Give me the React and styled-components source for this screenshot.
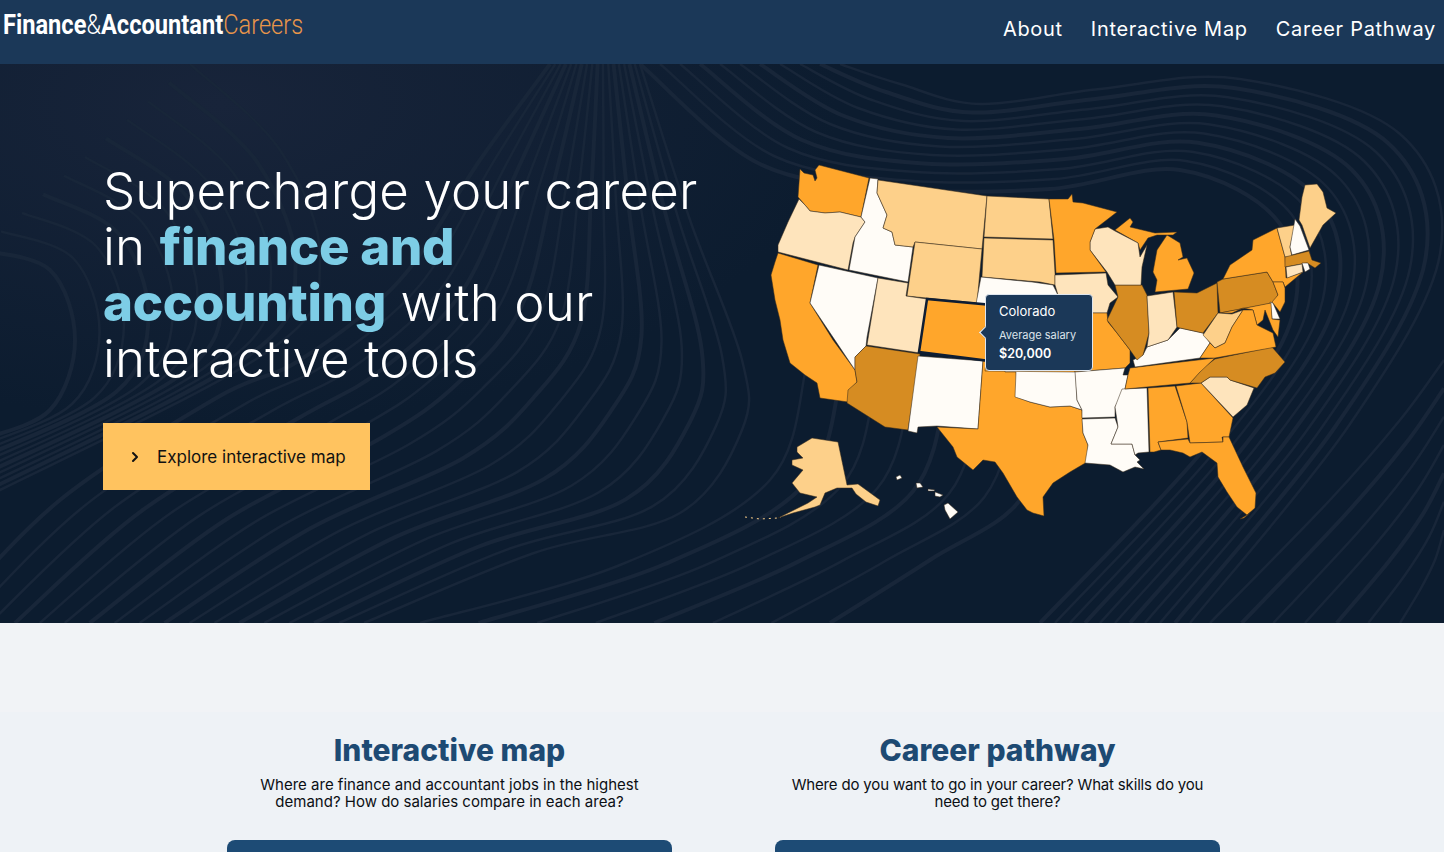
import React from 'react';
import styled, { createGlobalStyle } from 'styled-components';
import { ChevronRight } from 'lucide-react';

const ORANGE = '#ffa62b';
const DARK = '#d68c22';
const LIGHT = '#fdd08a';
const PALE = '#fee4bc';
const WHITE = '#fffcf7';

// state outlines, in page pixels (the svg viewBox starts at 740,150)
const STATES = [
  [ORANGE, '800,169 804,173 813,175 815,181 817,178 815,170 819,165 869,178 861,217 840,212 825,213 810,211 805,205 798,197'],
  [PALE, '799,199 805,205 810,211 825,213 840,212 861,217 865,222 855,237 853,243 848,270 778,252 778,245 788,222'],
  [ORANGE, '778,253 818,265 810,303 833,340 855,370 857,382 850,390 848,402 820,398 817,383 805,375 790,363 783,340 780,320 775,300 771,275 775,262'],
  [WHITE, '819,265 878,278 867,337 866,346 855,357 855,370 810,303'],
  [WHITE, '870,178 878,179 877,193 887,215 883,228 892,232 895,245 913,247 908,282 849,270 855,237 865,222 861,217'],
  [LIGHT, '878,180 987,196 982,249 915,242 913,247 895,245 892,232 883,228 887,215 877,193'],
  [LIGHT, '915,242 982,249 977,303 907,296'],
  [PALE, '878,278 908,283 906,296 927,299 919,352 920,353 867,345'],
  [DARK, '866,346 920,354 908,430 885,427 847,403 848,390 857,382 855,370 855,357'],
  [WHITE, '918,356 983,361 978,429 937,426 918,427 917,433 908,431'],
  [ORANGE, '983,361 1016,363 1017,397 1030,402 1050,407 1070,406 1082,410 1083,433 1088,445 1087,462 1070,472 1053,483 1043,497 1044,516 1033,513 1027,510 1017,497 1003,473 995,462 983,460 973,470 957,457 953,447 937,427 978,429'],
  [WHITE, '1005,362 1075,362 1077,400 1082,410 1070,406 1050,407 1030,402 1015,397 1016,372 1005,372'],
  [LIGHT, '987,196 1049,199 1053,239 984,237'],
  [LIGHT, '984,238 1053,240 1055,273 1055,285 1040,282 982,277'],
  [WHITE, '981,277 1032,282 1053,285 1057,293 1066,320 992,310 976,304'],
  [ORANGE, '992,310 1066,320 1075,372 985,371'],
  [PALE, '1055,275 1106,273 1108,285 1118,297 1110,303 1107,313 1093,313 1066,320 1058,295 1055,285'],
  [ORANGE, '1066,320 1093,313 1107,313 1108,322 1117,333 1130,350 1130,363 1125,368 1075,372'],
  [WHITE, '1075,372 1125,368 1123,375 1128,375 1125,389 1115,407 1115,417 1082,418 1082,410 1077,400'],
  [WHITE, '1082,419 1115,418 1118,427 1111,444 1132,444 1135,455 1140,460 1137,462 1144,469 1135,467 1123,472 1110,465 1085,463 1088,445 1083,433'],
  [WHITE, '1122,389 1147,388 1149,452 1138,453 1135,455 1132,444 1111,444 1118,427 1115,407'],
  [ORANGE, '1148,388 1175,386 1187,422 1188,438 1158,442 1161,450 1154,452 1150,452'],
  [ORANGE, '1176,386 1201,383 1233,418 1229,437 1222,437 1223,442 1190,443 1187,422'],
  [ORANGE, '1158,442 1188,439 1190,443 1223,442 1223,437 1229,437 1243,467 1256,493 1255,508 1247,515 1237,507 1227,492 1218,477 1217,463 1202,452 1190,457 1183,453 1170,450 1161,450'],
  [PALE, '1201,383 1210,377 1227,377 1230,380 1254,388 1247,405 1233,417'],
  [DARK, '1190,383 1203,368 1215,359 1272,347 1285,362 1275,373 1265,377 1257,388 1230,380 1227,377 1210,377 1201,383'],
  [ORANGE, '1130,368 1215,358 1200,372 1190,383 1125,389 1128,375'],
  [WHITE, '1133,360 1135,367 1200,358 1210,343 1203,333 1180,328 1168,340 1147,347 1143,355'],
  [DARK, '1115,285 1142,285 1147,295 1149,333 1143,355 1137,360 1130,350 1117,333 1107,320 1118,297'],
  [PALE, '1147,296 1173,292 1177,327 1168,340 1147,347 1149,333'],
  [DARK, '1174,292 1197,293 1217,283 1218,313 1203,333 1180,328 1177,327'],
  [ORANGE, '1153,272 1157,250 1167,235 1180,243 1183,257 1178,260 1187,258 1194,273 1188,289 1155,292 1157,280'],
  [ORANGE, '1115,230 1130,218 1133,222 1130,227 1155,233 1177,232 1173,235 1157,235 1148,238 1140,250 1138,243'],
  [PALE, '1095,229 1108,227 1115,231 1138,243 1140,257 1147,245 1142,267 1141,285 1115,285 1107,272 1090,250 1090,242'],
  [ORANGE, '1049,199 1068,199 1072,194 1073,202 1083,203 1117,212 1095,229 1090,242 1090,250 1106,272 1056,273 1054,240'],
  [DARK, '1217,282 1223,279 1267,272 1273,282 1278,295 1273,303 1220,313'],
  [ORANGE, '1223,279 1230,265 1252,250 1253,240 1277,228 1285,257 1286,278 1303,272 1285,287 1283,282 1273,282 1267,272'],
  [ORANGE, '1273,282 1283,282 1285,288 1285,302 1280,312 1272,302 1278,295'],
  [WHITE, '1270,302 1273,303 1280,319 1272,319'],
  [ORANGE, '1220,313 1271,303 1272,319 1280,320 1278,337 1273,330 1265,310 1263,320 1257,325 1253,310 1243,308 1232,313'],
  [LIGHT, '1218,313 1232,314 1243,310 1232,327 1225,343 1215,348 1203,335'],
  [ORANGE, '1200,358 1210,343 1215,348 1225,343 1232,327 1243,310 1253,310 1257,325 1273,333 1276,347 1215,358'],
  [LIGHT, '1277,228 1295,225 1290,247 1292,257 1285,257'],
  [WHITE, '1295,219 1300,226 1309,250 1292,255 1290,247'],
  [LIGHT, '1305,185 1317,184 1323,192 1327,208 1336,213 1323,225 1310,248 1302,225 1299,220 1302,197'],
  [DARK, '1285,257 1309,251 1312,260 1321,263 1315,268 1307,263 1285,267'],
  [PALE, '1286,267 1302,264 1303,272 1287,278'],
  [WHITE, '1302,263 1308,263 1310,269 1305,272'],
  [LIGHT, '797,447 812,438 838,442 847,485 858,484 880,500 878,506 866,502 856,494 852,488 837,488 825,493 820,505 815,507 793,513 778,518 808,503 817,497 800,493 792,483 803,470 792,465 792,460 803,458 797,452'],
  [ORANGE, '1240,519 1247,515 1250,513 1244,518'],
  [WHITE, '948,503 958,512 950,519 945,510 944,505'],
  [WHITE, '935,492 943,495 940,497 935,496'],
  [WHITE, '928,489 935,490 934,491 928,491'],
  [WHITE, '916,483 920,483 923,487 917,488'],
  [WHITE, '896,477 900,475 902,478 897,480'],
];
const COLORADO = '927,299 992,305 990,361 919,352';
const ALEUTIANS = 'M745,517 L760,519 L778,518';

// swirl lines behind the hero: each family is a set of non-crossing curves
// blended between two guide curves (page coordinates)
const FAMILIES = [
  {
    count: 11,
    a: [[640, 64], [760, 164], [900, 189], [1050, 189], [1180, 170], [1280, 224], [1290, 324], [1200, 454], [1040, 623]],
    b: [[840, 64], [900, 84], [980, 104], [1100, 89], [1240, 79], [1400, 134], [1440, 254], [1350, 424], [1190, 623]],
  },
  {
    count: 7,
    a: [[1210, 623], [1330, 500], [1400, 420], [1444, 360]],
    b: [[1400, 623], [1420, 590], [1435, 560], [1444, 530]],
  },
  {
    count: 18,
    a: [[-60, 623], [60, 500], [218, 397], [300, 360], [400, 280], [480, 160], [550, 64]],
    b: [[364, 623], [534, 553], [680, 513], [742, 430], [742, 360], [690, 220], [640, 64]],
  },
  {
    count: 11,
    a: [[-20, 250], [50, 270], [75, 340], [50, 410], [-20, 440]],
    b: [[190, 64], [280, 150], [320, 260], [270, 350], [-20, 500]],
  },
  {
    count: 8,
    a: [[420, 623], [620, 565], [770, 480], [810, 350], [840, 240]],
    b: [[830, 623], [930, 560], [1020, 500], [1050, 400], [1040, 300]],
  },
];

const smooth = (pts) => {
  let d = `M${pts[0][0]},${pts[0][1]}`;
  for (let i = 0; i < pts.length - 1; i++) {
    const p0 = pts[Math.max(i - 1, 0)];
    const p1 = pts[i];
    const p2 = pts[i + 1];
    const p3 = pts[Math.min(i + 2, pts.length - 1)];
    d += ` C${p1[0] + (p2[0] - p0[0]) / 6},${p1[1] + (p2[1] - p0[1]) / 6} ${p2[0] - (p3[0] - p1[0]) / 6},${p2[1] - (p3[1] - p1[1]) / 6} ${p2[0]},${p2[1]}`;
  }
  return d;
};

const swirls = FAMILIES.flatMap(({ count, a, b }) =>
  Array.from({ length: count }, (_, n) => {
    const t = n / (count - 1);
    return smooth(a.map((p, i) => [p[0] + (b[i][0] - p[0]) * t, p[1] + (b[i][1] - p[1]) * t]));
  })
);

const GlobalStyle = createGlobalStyle`
  html, body {
    margin: 0;
    height: 100%;
    overflow: hidden;
    background: #f1f3f6;
    font-family: Inter, 'Liberation Sans', sans-serif;
  }
`;

const Header = styled.header`
  height: 64px;
  background: #1b3858;
  display: flex;
  justify-content: space-between;
  padding: 0 8px 0 3px;
`;

const Logo = styled.div`
  font-family: Roboto, sans-serif;
  font-size: 27px;
  line-height: 50px;
  color: #fff;
  white-space: nowrap;
  transform: scaleX(0.875);
  transform-origin: left center;
  b { font-weight: 700; }
  span { font-weight: 300; }
  em { font-style: normal; font-weight: 300; color: #e8954a; }
`;

const Nav = styled.nav`
  display: flex;
  gap: 28px;
  padding-top: 17px;
`;

const NavLink = styled.a`
  font-size: 20px;
  line-height: 24px;
  letter-spacing: 0.7px;
  color: #fff;
  white-space: nowrap;
`;

const Hero = styled.section`
  position: relative;
  height: 559px;
  overflow: hidden;
  background: radial-gradient(ellipse 620px 320px at 220px 40px, #18243a 0%, #0c1c2f 100%);
  display: grid;
  grid-template-columns: 637px 610px;
  padding: 86px 0 0 103px;
  box-sizing: border-box;
`;

const Swirl = styled.svg`
  position: absolute;
  inset: 0;
`;

const HeroText = styled.div`
  position: relative;
  padding-top: 13px;
`;

const Title = styled.h1`
  margin: 0 0 36px;
  font-size: 51px;
  line-height: 56px;
  font-weight: 300;
  color: #fff;
  letter-spacing: 0.15px;
  white-space: nowrap;
  strong { font-weight: 800; color: #7dcde6; letter-spacing: -0.3px; }
`;

const HeroButton = styled.a`
  display: inline-flex;
  align-items: center;
  gap: 14px;
  width: 267px;
  height: 67px;
  padding-left: 24px;
  box-sizing: border-box;
  background: #ffc35f;
  color: #111;
  font-size: 17px;
  white-space: nowrap;
`;

const MapWrap = styled.div`
  position: relative;
  width: 610px;
  height: 380px;
`;

const MapSvg = styled.svg`
  display: block;
`;

const Tip = styled.div`
  position: absolute;
  left: 245px;
  top: 144px;
  width: 108px;
  height: 77px;
  box-sizing: border-box;
  padding: 8px 13px;
  background: #1b3858;
  border: 1px solid #dfe6ee;
  border-radius: 4px;
  color: #fff;
  &::before {
    content: '';
    position: absolute;
    left: -5px;
    top: 33px;
    width: 8px;
    height: 8px;
    background: #1b3858;
    border-left: 1px solid #fff;
    border-bottom: 1px solid #fff;
    transform: rotate(45deg);
  }
`;

const TipName = styled.div`
  font-size: 13px;
  line-height: 16px;
  margin-bottom: 9px;
`;

const TipLabel = styled.div`
  font-size: 11px;
  line-height: 14px;
  color: #dbe3ea;
  margin-bottom: 4px;
`;

const TipValue = styled.div`
  font-size: 12.5px;
  line-height: 15px;
  font-weight: 600;
`;

const Spacer = styled.div`
  height: 89px;
  background: #f1f3f6;
`;

const Features = styled.section`
  background: #eef2f6;
  display: grid;
  grid-template-columns: 445px 445px;
  gap: 103px;
  padding: 20px 0 0 227px;
`;

const Feature = styled.article`
  text-align: center;
`;

const FeatureTitle = styled.h2`
  margin: 0 0 8px;
  font-size: 30px;
  line-height: 36px;
  font-weight: 800;
  color: #1d4a73;
`;

const FeatureText = styled.p`
  margin: 0 0 30px;
  font-size: 15px;
  line-height: 17px;
  letter-spacing: ${(props) => props.$tracking || 0}px;
  color: #0b0f14;
`;

const FeatureCard = styled.div`
  height: 12px;
  background: #1d4b75;
  border-radius: 8px 8px 0 0;
`;

export default function App() {
  return (
    <>
      <GlobalStyle />
      <Header>
        <Logo>
          <b>Finance</b><span>&amp;</span><b>Accountant</b><em>Careers</em>
        </Logo>
        <Nav>
          <NavLink>About</NavLink>
          <NavLink>Interactive Map</NavLink>
          <NavLink>Career Pathway</NavLink>
        </Nav>
      </Header>
      <Hero>
        <Swirl width="1444" height="559" viewBox="0 64 1444 559" fill="none">
          {swirls.map((d, i) => (
            <path key={i} d={d} stroke="#182639" strokeWidth={i % 3 === 0 ? 4 : 2.5} />
          ))}
        </Swirl>
        <HeroText>
          <Title>
            Supercharge your career
            <br />
            in <strong>finance and</strong>
            <br />
            <strong>accounting</strong> with our
            <br />
            interactive tools
          </Title>
          <HeroButton>
            <ChevronRight size={16} strokeWidth={3} />
            Explore interactive map
          </HeroButton>
        </HeroText>
        <MapWrap>
          <MapSvg width="610" height="380" viewBox="740 150 610 380">
            {STATES.map(([fill, points], i) => (
              <polygon key={i} points={points} fill={fill} stroke="#3a2c1c" strokeOpacity="0.65" strokeWidth="0.8" strokeLinejoin="round" />
            ))}
            <path d={ALEUTIANS} fill="none" stroke={LIGHT} strokeWidth="1" strokeDasharray="2 4" />
            <polygon points={COLORADO} fill={ORANGE} stroke="#0e1d33" strokeWidth="2.5" />
          </MapSvg>
          <Tip>
            <TipName>Colorado</TipName>
            <TipLabel>Average salary</TipLabel>
            <TipValue>$20,000</TipValue>
          </Tip>
        </MapWrap>
      </Hero>
      <Spacer />
      <Features>
        <Feature>
          <FeatureTitle>Interactive map</FeatureTitle>
          <FeatureText>
            Where are finance and accountant jobs in the highest
            <br />
            demand? How do salaries compare in each area?
          </FeatureText>
          <FeatureCard />
        </Feature>
        <Feature>
          <FeatureTitle>Career pathway</FeatureTitle>
          <FeatureText $tracking={-0.17}>
            Where do you want to go in your career? What skills do you
            <br />
            need to get there?
          </FeatureText>
          <FeatureCard />
        </Feature>
      </Features>
    </>
  );
}
